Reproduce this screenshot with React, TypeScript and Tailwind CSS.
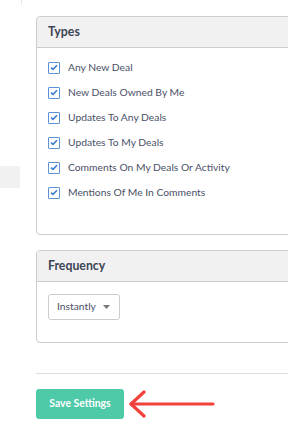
import React from "react";

const items = [
  "Any New Deal",
  "New Deals Owned By Me",
  "Updates To Any Deals",
  "Updates To My Deals",
  "Comments On My Deals Or Activity",
  "Mentions Of Me In Comments",
];

function Check() {
  return (
    <span className="flex h-[12px] w-[12px] shrink-0 items-center justify-center rounded-[1px] border border-[#5b93d6] bg-white">
      <svg width="8" height="7" viewBox="0 0 8 7">
        <path d="M1 3.6 L3 5.4 L7 1.2" fill="none" stroke="#3d7fd0" strokeWidth="1.6" />
      </svg>
    </span>
  );
}

export default function App() {
  return (
    <div
      className="relative flex h-[441px] w-[288px] overflow-hidden bg-white"
      style={{ fontFamily: 'Lato, "Open Sans", "Liberation Sans", sans-serif' }}
    >
      <div className="flex w-[36px] shrink-0 flex-col">
        <div className="ml-[21px] h-[5px] w-px bg-[#e6e6e6]" />
        <div className="mt-[161px] h-[22px] w-[20px] bg-[#f1f1f1]" />
      </div>
      <div className="flex w-[300px] shrink-0 flex-col pt-[16px]">
        <div className="rounded-l-[4px] border border-[#cccccc]">
          <div className="flex h-[31px] items-center rounded-tl-[4px] border-b border-[#cccccc] bg-[#f1f1f1] pl-[11px] pt-[1px] text-[12.3px] font-bold text-[#3c4556]">
            Types
          </div>
          <div className="flex flex-col pl-[11px] pt-[7px] pb-[29px]">
            {items.map((t) => (
              <div key={t} className="flex h-[25px] items-center gap-[8px] text-[10.3px] text-[#4a5068]">
                <Check />
                <span>{t}</span>
              </div>
            ))}
          </div>
        </div>
        <div className="mt-[15px] rounded-l-[4px] border border-[#cccccc]">
          <div className="flex h-[31px] items-center rounded-tl-[4px] border-b border-[#cccccc] bg-[#f1f1f1] pl-[11px] pt-[1px] text-[12.3px] font-bold text-[#3c4556]">
            Frequency
          </div>
          <div className="pl-[11px] pt-[12px] pb-[22px]">
            <div className="flex h-[26px] w-[72px] items-center justify-between rounded-[3px] border border-[#cccccc] pl-[8px] pr-[9px] text-[10.3px] text-[#4a5068]">
              <span>Instantly</span>
              <svg width="7" height="4" viewBox="0 0 7 4">
                <path d="M0 0 L7 0 L3.5 4 Z" fill="#777" />
              </svg>
            </div>
          </div>
        </div>
        <div className="mt-[30px] h-px w-full bg-[#dddddd]" />
        <div className="mt-[15px] flex items-center">
          <button className="flex h-[30px] w-[88px] items-center justify-center rounded-[3px] bg-[#4ecaa8] text-[10.4px] font-bold text-white">
            Save Settings
          </button>
          <svg width="90" height="28" viewBox="0 0 90 28" className="ml-[3px]">
            <path d="M4 14 L86 14" stroke="#f2403a" strokeWidth="3.2" strokeLinecap="round" />
            <path d="M17 2 L4 14 L17 26" fill="none" stroke="#f2403a" strokeWidth="3.2" strokeLinecap="round" strokeLinejoin="round" />
          </svg>
        </div>
      </div>
    </div>
  );
}
